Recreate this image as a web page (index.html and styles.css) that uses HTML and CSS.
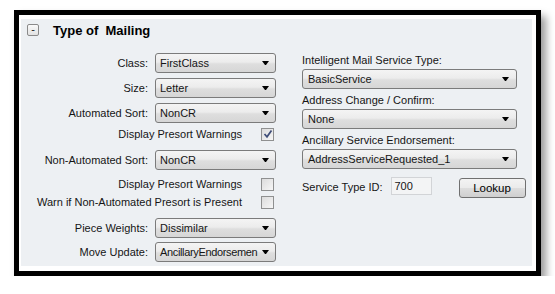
FILE: index.html
```html
<!DOCTYPE html>
<html>
<head>
  <title>Type of Mailing</title>
  <link rel="stylesheet" href="styles.css">
</head>
<body>

<div class="frame">
<div class="panel">

  <div class="header">
    <span class="collapse">-</span>
    <span class="title">Type of&nbsp; Mailing</span>
  </div>

  <div class="body">

    <div class="leftcol">
      <div class="field">
        <label>Class:</label>
        <div class="combo"><span class="value">FirstClass</span><span class="arrow"></span></div>
      </div>
      <div class="field">
        <label>Size:</label>
        <div class="combo"><span class="value">Letter</span><span class="arrow"></span></div>
      </div>
      <div class="field">
        <label>Automated Sort:</label>
        <div class="combo"><span class="value">NonCR</span><span class="arrow"></span></div>
      </div>
      <div class="check">
        <label>Display Presort Warnings</label>
        <span class="box checked">
          <svg width="10" height="10" viewBox="0 0 10 10"><polyline points="1.5,5 4,7.8 8.5,1.5" fill="none" stroke="#3e4d78" stroke-width="1.7"/></svg>
        </span>
      </div>
      <div class="field gap5">
        <label>Non-Automated Sort:</label>
        <div class="combo"><span class="value">NonCR</span><span class="arrow"></span></div>
      </div>
      <div class="check gap3">
        <label>Display Presort Warnings</label>
        <span class="box"></span>
      </div>
      <div class="check gap1">
        <label>Warn if Non-Automated Presort is Present</label>
        <span class="box"></span>
      </div>
      <div class="field gap5">
        <label>Piece Weights:</label>
        <div class="combo"><span class="value">Dissimilar</span><span class="arrow"></span></div>
      </div>
      <div class="field back1">
        <label>Move Update:</label>
        <div class="combo"><span class="value tight">AncillaryEndorsemen</span><span class="arrow"></span></div>
      </div>
    </div>

    <div class="rightcol">
      <div class="group">
        <label>Intelligent Mail Service Type:</label>
        <div class="combo wide"><span class="value">BasicService</span><span class="arrow"></span></div>
      </div>
      <div class="group">
        <label>Address Change / Confirm:</label>
        <div class="combo wide"><span class="value">None</span><span class="arrow"></span></div>
      </div>
      <div class="group">
        <label>Ancillary Service Endorsement:</label>
        <div class="combo wide"><span class="value">AddressServiceRequested_1</span><span class="arrow"></span></div>
      </div>
      <div class="service">
        <label>Service Type ID:</label>
        <span class="textbox">700</span>
        <span class="button">Lookup</span>
      </div>
    </div>

  </div>

</div>
</div>

</body>
</html>
```

FILE: styles.css
```css
body {
    margin: 0;
    background-color: #fff;
    font-family: "Liberation Sans", Arial, sans-serif;
    font-size: 11px;
    color: #151515;
}

.frame {
    margin: 10px 0 0 14px;
    width: 511px;
    height: 247px;
    border: 5px solid #000;
    padding: 4px 4px 5px 2px;
    background-color: #fff;
    box-shadow: 5px 6px 8px rgba(0, 0, 0, 0.4);
}

.panel {
    height: 100%;
    background-color: #edf0f3;
    padding-left: 6px;
    box-sizing: border-box;
}

/* header */
.header {
    display: flex;
    align-items: center;
    height: 22px;
}
.collapse {
    width: 10px;
    height: 10px;
    border: 1px solid #8a8a8a;
    border-radius: 2px;
    background: linear-gradient(#fafafa, #e2e2e2);
    font-size: 11px;
    line-height: 9px;
    text-align: center;
    color: #222;
}
.title {
    margin-left: 14px;
    font-size: 13px;
    font-weight: bold;
    color: #000;
}

.body {
    display: flex;
    margin-top: 12px;
}

/* left column */
.leftcol {
    width: 249px;
    display: flex;
    flex-direction: column;
    gap: 5px;
}
.field {
    display: grid;
    grid-template-columns: 1fr 121px;
    column-gap: 7px;
    align-items: center;
    height: 20px;
}
.field label {
    text-align: right;
    white-space: nowrap;
}
.check {
    display: flex;
    justify-content: flex-end;
    align-items: center;
    gap: 19px;
    height: 12px;
    padding-right: 2px;
}
.check label {
    white-space: nowrap;
}
.gap5 { margin-top: 5px; }
.gap3 { margin-top: 3px; }
.gap1 { margin-top: 1px; }
.back1 { margin-top: -1px; }

.box {
    display: flex;
    align-items: center;
    justify-content: center;
    width: 11px;
    height: 11px;
    border: 1px solid #8f9090;
    background: linear-gradient(135deg, #dcdcdc, #f6f6f6);
    box-sizing: content-box;
}

/* combo box */
.combo {
    display: flex;
    align-items: center;
    height: 18px;
    border: 1px solid #7b7b7b;
    border-radius: 3px;
    background: linear-gradient(#f4f4f4 0%, #ececec 45%, #dedede 55%, #d6d6d6 100%);
    padding: 0 6px 0 4px;
    overflow: hidden;
}
.combo .value {
    flex: 1;
    white-space: nowrap;
}
.combo .tight {
    letter-spacing: -0.35px;
}
.combo .arrow {
    flex: none;
    width: 1px;
    height: 0;
    margin-left: 2px;
    border-left: 3px solid transparent;
    border-right: 3px solid transparent;
    border-top: 4px solid #000;
}
.combo.wide {
    padding-left: 5px;
    padding-right: 7px;
}

/* right column */
.rightcol {
    margin-left: 26px;
    width: 224px;
    display: flex;
    flex-direction: column;
}
.group {
    display: flex;
    flex-direction: column;
    gap: 2px;
    margin-bottom: 4px;
}
.group label {
    height: 14px;
    line-height: 14px;
}
.group .combo {
    width: 201px;
}
.service {
    display: flex;
    align-items: center;
    margin-top: 3px;
    height: 22px;
}
.textbox {
    margin-left: 8px;
    width: 36px;
    height: 16px;
    line-height: 16px;
    border: 1px solid #d2d4d7;
    background-color: #f3f4f5;
    padding-left: 3px;
    margin-top: -2px;
}
.button {
    margin-left: 27px;
    width: 65px;
    height: 18px;
    line-height: 18px;
    text-align: center;
    border: 1px solid #707070;
    border-radius: 3px;
    background: linear-gradient(#f3f3f3 0%, #ebebeb 48%, #dddddd 52%, #cfcfcf 100%);
    color: #000;
    font-size: 11.5px;
    margin-top: 2px;
}
```
